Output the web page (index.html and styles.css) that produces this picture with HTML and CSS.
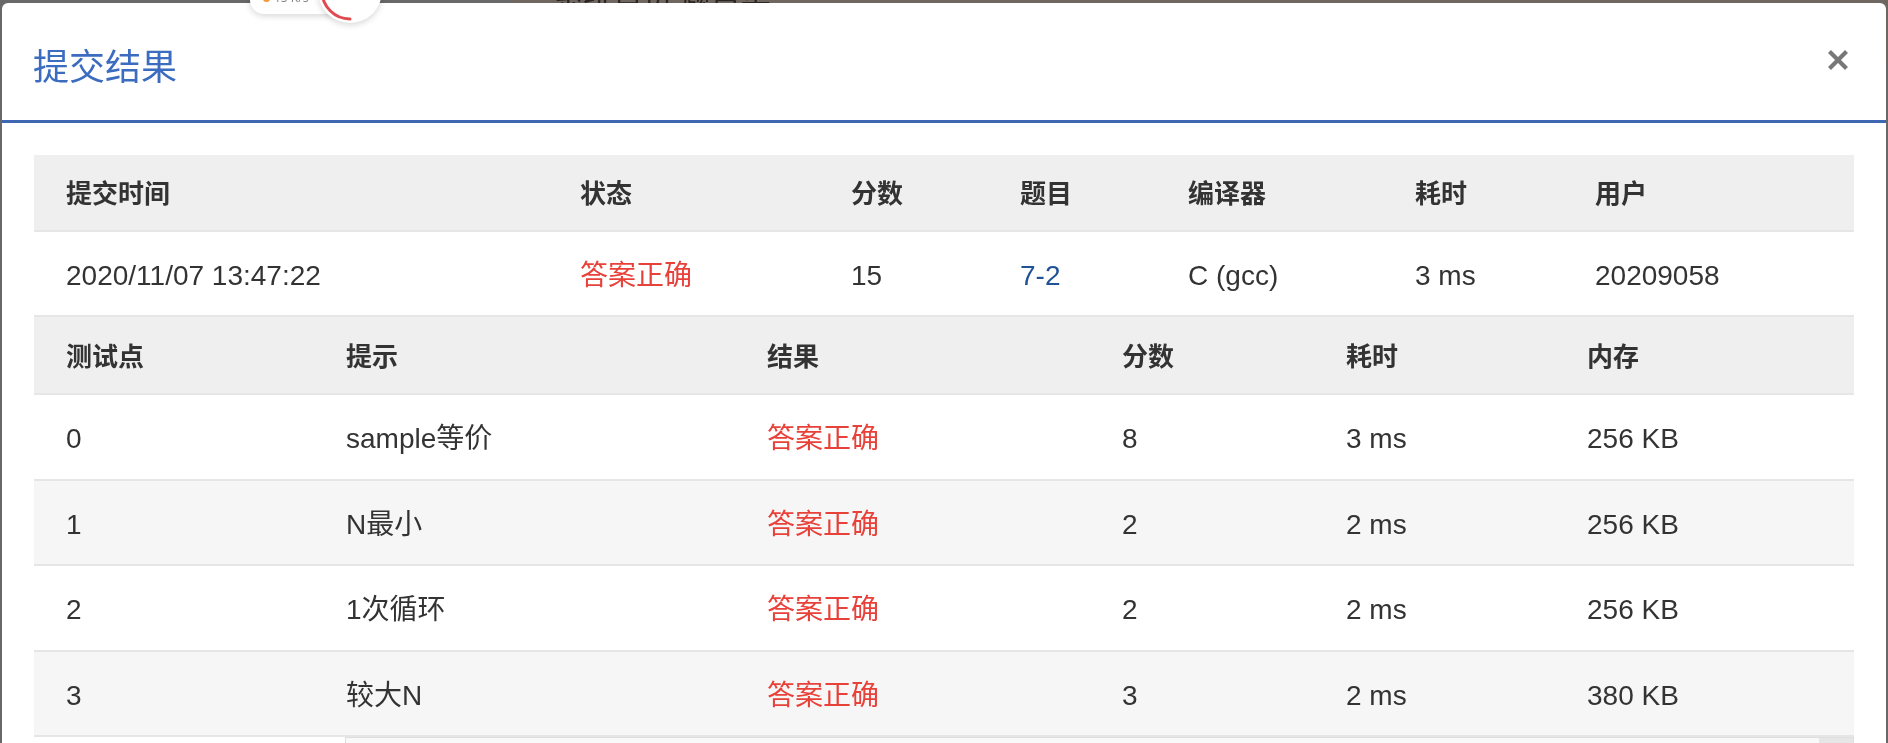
FILE: index.html
```html
<!DOCTYPE html>
<html lang="zh-CN">
<head>
<meta charset="utf-8">
<title>提交结果</title>
<link rel="stylesheet" href="styles.css">
</head>
<body>
<div class="backdrop">
  <div class="bg-photo"><span class="bg-text">系统首页 题目集</span></div>
</div>

<div class="modal">
  <div class="modal-header">
    <h2 class="modal-title">提交结果</h2>
    <button class="close" type="button" aria-label="关闭">
      <svg width="20" height="20" viewBox="0 0 20 20"><path d="M1.5 1.5 L18.5 18.5 M18.5 1.5 L1.5 18.5" stroke="#777" stroke-width="4.2" stroke-linecap="butt" fill="none"/></svg>
    </button>
  </div>
  <div class="modal-body">
    <table class="result summary">
      <colgroup>
        <col class="w514"><col class="w271"><col class="w169"><col class="w168"><col class="w227"><col class="w180"><col class="w291">
      </colgroup>
      <thead>
        <tr><th>提交时间</th><th>状态</th><th>分数</th><th>题目</th><th>编译器</th><th>耗时</th><th>用户</th></tr>
      </thead>
      <tbody>
        <tr><td>2020/11/07 13:47:22</td><td class="ok">答案正确</td><td>15</td><td><a class="link" href="#">7-2</a></td><td>C (gcc)</td><td>3 ms</td><td>20209058</td></tr>
      </tbody>
    </table>
    <table class="result cases">
      <colgroup>
        <col class="w280"><col class="w421"><col class="w355"><col class="w224"><col class="w241"><col class="w299">
      </colgroup>
      <thead>
        <tr><th>测试点</th><th>提示</th><th>结果</th><th>分数</th><th>耗时</th><th>内存</th></tr>
      </thead>
      <tbody>
        <tr><td>0</td><td>sample等价</td><td class="ok">答案正确</td><td>8</td><td>3 ms</td><td>256 KB</td></tr>
        <tr class="alt"><td>1</td><td>N最小</td><td class="ok">答案正确</td><td>2</td><td>2 ms</td><td>256 KB</td></tr>
        <tr><td>2</td><td>1次循环</td><td class="ok">答案正确</td><td>2</td><td>2 ms</td><td>256 KB</td></tr>
        <tr class="alt"><td>3</td><td>较大N</td><td class="ok">答案正确</td><td>3</td><td>2 ms</td><td>380 KB</td></tr>
        <tr class="detail"><td></td><td colspan="5"><div class="output-box"><div class="output-scroll"></div></div></td></tr>
      </tbody>
    </table>
  </div>
</div>

<div class="speed-widget">
  <div class="speed-pill"><span class="speed-dot"></span>15&nbsp;K/s</div>
  <div class="speed-ring">
    <svg width="64" height="64" viewBox="0 0 64 64"><path d="M32 60 A28 28 0 0 1 4 32" stroke="#e34a4f" stroke-width="3" fill="none" stroke-linecap="round"/></svg>
  </div>
</div>
</body>
</html>
```

FILE: styles.css
```css
html, body {
  margin: 0;
  padding: 0;
  height: 100%;
  overflow: hidden;
}

body {
  background: #676767;
  font-family: "Noto Sans", "Noto Sans CJK SC", sans-serif;
  color: #333;
}

.backdrop {
  position: fixed;
  inset: 0;
  background: #686868;
}

.bg-photo {
  position: absolute;
  left: 510px;
  top: 0;
  right: 0;
  height: 60px;
  background: #6f6660;
}

.bg-text {
  position: absolute;
  left: 43px;
  top: -27px;
  font-size: 30px;
  color: #2b2623;
  white-space: nowrap;
}

.modal {
  position: absolute;
  top: 3px;
  left: 2px;
  right: 2px;
  bottom: -60px;
  background: #fff;
  border-radius: 6px;
  overflow: hidden;
}

.modal-header {
  box-sizing: border-box;
  height: 120px;
  border-bottom: 3px solid #3d67b3;
  display: flex;
  align-items: center;
  justify-content: space-between;
  padding: 4px 38px 0 31px;
}

.modal-title {
  margin: 0;
  font-family: "Noto Sans CJK SC", sans-serif;
  font-size: 36px;
  line-height: 1;
  font-weight: 400;
  color: #3b6cc0;
}

.close {
  border: 0;
  background: none;
  padding: 0;
  width: 20px;
  height: 20px;
  margin-top: -7px;
  display: flex;
  cursor: pointer;
}

.modal-body {
  padding: 32px 32px 0 32px;
}

.result {
  width: 100%;
  table-layout: fixed;
  border-collapse: separate;
  border-spacing: 0;
  line-height: 1.4;
}

.w514 { width: 514px; }
.w271 { width: 271px; }
.w169 { width: 169px; }
.w168 { width: 168px; }
.w227 { width: 227px; }
.w180 { width: 180px; }
.w291 { width: 291px; }
.w280 { width: 280px; }
.w421 { width: 421px; }
.w355 { width: 355px; }
.w224 { width: 224px; }
.w241 { width: 241px; }
.w299 { width: 299px; }

.result th,
.result td {
  box-sizing: border-box;
  padding: 0 8px 0 32px;
  text-align: left;
  vertical-align: middle;
  border-bottom: 2px solid #e6e6e6;
  white-space: nowrap;
}

.result th {
  height: 77px;
  background: #efefef;
  font-family: "Noto Sans CJK SC", sans-serif;
  font-size: 26px;
  font-weight: 700;
  color: #333;
}

.result td {
  height: 85px;
  padding-top: 4px;
  background: #fff;
  font-family: "Liberation Sans", "Noto Sans CJK SC", sans-serif;
  font-size: 28px;
  color: #333;
}

.cases th {
  height: 78px;
}

.cases td {
  height: 85.5px;
}

.cases tr.alt td {
  background: #f6f6f6;
}

.ok {
  color: #e8413a !important;
}

.link {
  color: #1f5296;
  text-decoration: none;
}

.cases tr.detail td {
  height: 40px;
  border-bottom: 0;
  vertical-align: top;
  padding: 0;
}

.cases tr.detail td + td {
  padding-left: 31px;
}

.output-box {
  display: flex;
  justify-content: flex-end;
  height: 40px;
  border: 1px solid #dedede;
  background: #f9f9f9;
}

.output-scroll {
  width: 34px;
  background: #e6e6e6;
}

.speed-widget {
  position: fixed;
  top: 0;
  left: 250px;
  width: 140px;
  height: 30px;
}

.speed-pill {
  position: absolute;
  left: 0;
  top: -14px;
  width: 96px;
  height: 28px;
  border-radius: 14px;
  background: #fff;
  box-shadow: 0 2px 6px rgba(0, 0, 0, 0.16);
  font-size: 12px;
  line-height: 12px;
  color: #888;
  box-sizing: border-box;
  padding: 6px 0 0 13px;
  display: flex;
  align-items: flex-start;
  gap: 4px;
}

.speed-dot {
  width: 7px;
  height: 7px;
  margin-top: 3px;
  border-radius: 50%;
  background: #f39a3c;
}

.speed-ring {
  position: absolute;
  left: 68px;
  top: -41px;
  width: 64px;
  height: 64px;
  border-radius: 50%;
  background: #fff;
  box-shadow: 0 2px 6px rgba(0, 0, 0, 0.16);
}

.speed-ring svg {
  display: block;
}
```
